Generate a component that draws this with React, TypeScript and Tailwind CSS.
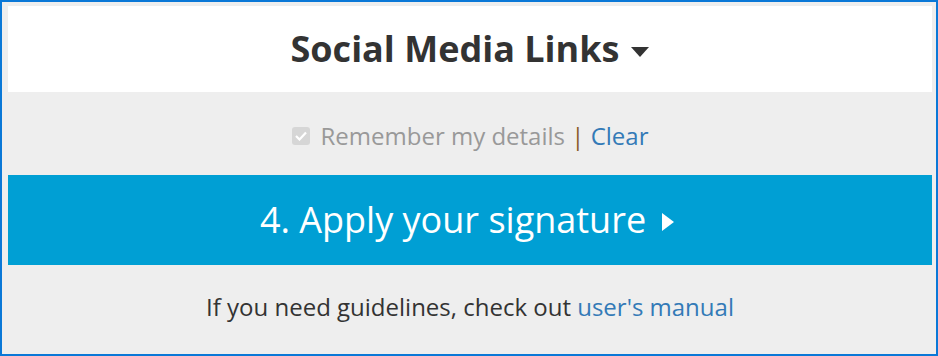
import React from "react";

const font = { fontFamily: '"Open Sans", "Liberation Sans", sans-serif' };

function CaretDown() {
  return (
    <svg width="18" height="10" viewBox="0 0 18 10" className="ml-[12px] mt-[6px]">
      <path d="M0 0h18L9 10z" fill="#333333" />
    </svg>
  );
}

function CaretRight() {
  return (
    <svg width="12" height="18" viewBox="0 0 12 18" className="ml-[16px] mt-[4px]">
      <path d="M0 0l12 9L0 18z" fill="#ffffff" />
    </svg>
  );
}

export default function App() {
  return (
    <div
      className="w-[938px] h-[356px] border-2 border-[#0a78d7] bg-[#eeeeee] pl-[6px] pr-[4px] pt-[4px] flex flex-col"
      style={font}
    >
      {/* Header */}
      <div className="h-[86px] bg-white flex items-center justify-center">
        <span className="text-[36px] font-bold text-[#333333] leading-none">Social Media Links</span>
        <CaretDown />
      </div>

      {/* Remember row */}
      <div className="h-[83px] flex items-center justify-center gap-[11px] text-[24px] leading-none pt-[4px]">
        <span className="w-[18px] h-[18px] rounded-[3px] bg-[#d6d6d6] flex items-center justify-center">
          <svg width="12" height="10" viewBox="0 0 12 10">
            <path d="M1 5l3.5 3.5L11 1.5" stroke="#ffffff" strokeWidth="2.2" fill="none" />
          </svg>
        </span>
        <span className="text-[#999999]">
          Remember my details <span className="text-[#8a5a2b]">|</span>{" "}
          <a className="text-[#337ab7]">Clear</a>
        </span>
      </div>

      {/* Apply button */}
      <div className="h-[90px] bg-[#009fd4] flex items-center justify-center pr-[6px]">
        <span className="text-[36px] text-white leading-none">4. Apply your signature</span>
        <CaretRight />
      </div>

      {/* Footer */}
      <div className="flex-1 flex items-center justify-center text-[24px] text-[#333333] leading-none pb-[6px]">
        <span>
          If you need guidelines, check out <a className="text-[#337ab7]">user's manual</a>
        </span>
      </div>
    </div>
  );
}
